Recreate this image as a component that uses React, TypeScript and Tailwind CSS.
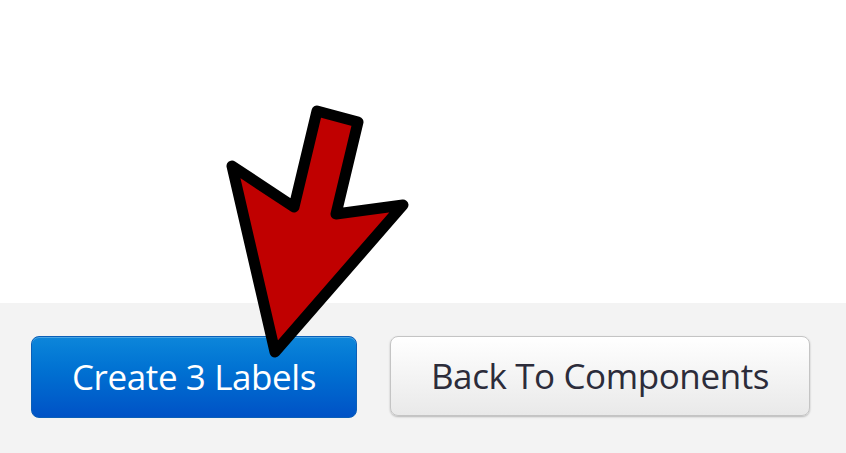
import React from "react";

export default function App() {
  return (
    <div className="relative w-[846px] h-[453px] overflow-hidden bg-white" style={{ fontFamily: '"Open Sans", "Liberation Sans", sans-serif' }}>
      <div className="h-[303px] bg-white" />
      <div className="h-[150px] bg-[#f3f3f3] flex items-start gap-[33px] pl-[31px] pt-[33px]">
        <button className="w-[326px] h-[82px] rounded-[8px] border border-[#0a5fb8] bg-gradient-to-b from-[#0d86da] to-[#0052c6] text-white text-[35px] tracking-[-0.4px] flex items-center justify-center shadow-[inset_0_1px_0_rgba(255,255,255,0.25)]">
          Create 3 Labels
        </button>
        <button className="w-[420px] h-[80px] rounded-[8px] border border-[#c4c4c4] bg-gradient-to-b from-white to-[#e9e9e9] text-[#2c2c3a] text-[35px] tracking-[-0.4px] flex items-center justify-center shadow-[0_1px_2px_rgba(0,0,0,0.25)]">
          Back To Components
        </button>
      </div>
      <svg className="absolute left-0 top-0" width="846" height="453" viewBox="0 0 846 453">
        <polygon
          points="317,111 358,122 336,214 403,205 275,352 232,166 294,207"
          fill="#c00000"
          stroke="#000"
          strokeWidth="11"
          strokeLinejoin="round"
        />
      </svg>
    </div>
  );
}
